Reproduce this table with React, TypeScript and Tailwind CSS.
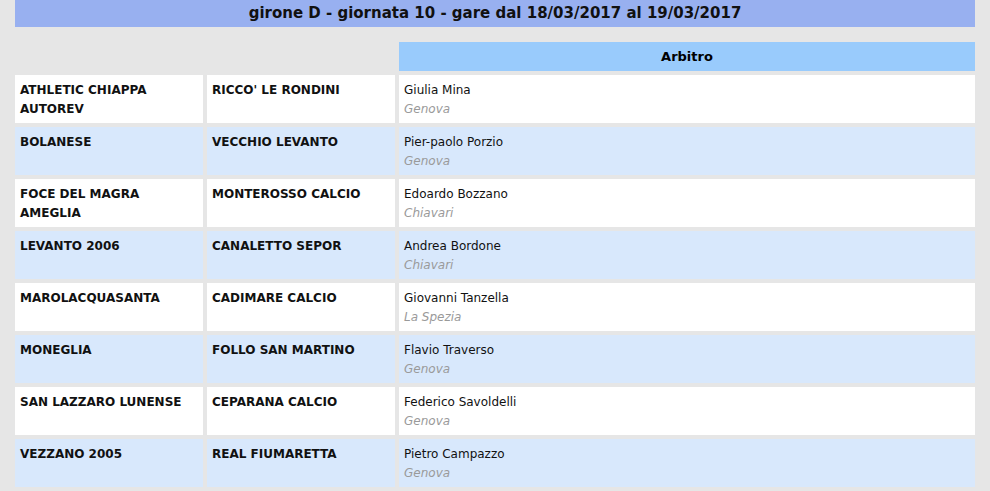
import React from "react";

type Match = { home: string; away: string; ref: string; city: string };

const matches: Match[] = [
  { home: "ATHLETIC CHIAPPA AUTOREV", away: "RICCO' LE RONDINI", ref: "Giulia Mina", city: "Genova" },
  { home: "BOLANESE", away: "VECCHIO LEVANTO", ref: "Pier-paolo Porzio", city: "Genova" },
  { home: "FOCE DEL MAGRA AMEGLIA", away: "MONTEROSSO CALCIO", ref: "Edoardo Bozzano", city: "Chiavari" },
  { home: "LEVANTO 2006", away: "CANALETTO SEPOR", ref: "Andrea Bordone", city: "Chiavari" },
  { home: "MAROLACQUASANTA", away: "CADIMARE CALCIO", ref: "Giovanni Tanzella", city: "La Spezia" },
  { home: "MONEGLIA", away: "FOLLO SAN MARTINO", ref: "Flavio Traverso", city: "Genova" },
  { home: "SAN LAZZARO LUNENSE", away: "CEPARANA CALCIO", ref: "Federico Savoldelli", city: "Genova" },
  { home: "VEZZANO 2005", away: "REAL FIUMARETTA", ref: "Pietro Campazzo", city: "Genova" },
];

export default function App() {
  return (
    <div className="w-[990px] h-[491px] overflow-hidden bg-[#e6e6e6] text-black font-['DejaVu_Sans','Liberation_Sans',sans-serif]">
      {/* title bar */}
      <div className="mx-[15px] h-[27px] bg-[#98b0f0] flex items-center justify-center text-[15px] font-bold text-[#111]">
        girone D - giornata 10 - gare dal 18/03/2017 al 19/03/2017
      </div>

      <div className="mx-[15px] mt-[15px] grid grid-cols-[188px_188px_576px] gap-1">
        <div />
        <div />
        <div className="h-[29px] bg-[#99cbfc] flex items-center justify-center text-[13px] font-bold">
          Arbitro
        </div>

        {matches.map((m, i) => {
          const bg = i % 2 === 0 ? "bg-white" : "bg-[#d8e8fc]";
          return (
            <React.Fragment key={i}>
              <div className={`${bg} h-[48px] px-[5px] pt-[6px] text-[12px] leading-[19px] font-bold text-[#111]`}>
                {m.home}
              </div>
              <div className={`${bg} h-[48px] px-[5px] pt-[6px] text-[12px] leading-[19px] font-bold text-[#111]`}>
                {m.away}
              </div>
              <div className={`${bg} h-[48px] px-[5px] pt-[6px] text-[12px] leading-[19px]`}>
                <div className="text-[#111]">{m.ref}</div>
                <div className="italic text-[#9a9a9a]">{m.city}</div>
              </div>
            </React.Fragment>
          );
        })}
      </div>
    </div>
  );
}
